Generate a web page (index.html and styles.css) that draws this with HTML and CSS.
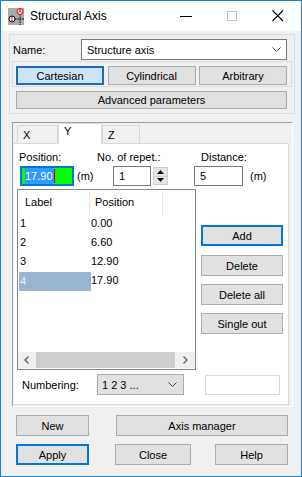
FILE: index.html
```html
<!DOCTYPE html>
<html lang="en">
<head>
    <meta charset="UTF-8">
    <title>Structural Axis</title>
    <link rel="stylesheet" href="styles.css">
</head>
<body>
<div class="window">
    <!-- Title bar -->
    <div class="titlebar">
        <svg class="app-icon" width="16" height="17" viewBox="0 0 16 17">
            <rect x="0" y="0" width="16" height="17" fill="#a9a9a9"/>
            <line x1="12" y1="6" x2="12" y2="17" stroke="#000" stroke-width="1" stroke-dasharray="1.5 1"/>
            <line x1="7" y1="11" x2="16" y2="11" stroke="#000" stroke-width="1" stroke-dasharray="1.5 1"/>
            <circle cx="12" cy="3.5" r="3" fill="#fff" stroke="#d00" stroke-width="1"/>
            <text x="12" y="5.3" font-size="5" text-anchor="middle" fill="#d00" font-family="Liberation Sans, sans-serif" font-weight="bold">A</text>
            <circle cx="4" cy="11" r="3" fill="#fff" stroke="#000" stroke-width="1"/>
            <text x="4" y="12.8" font-size="5" text-anchor="middle" fill="#d00" font-family="Liberation Sans, sans-serif" font-weight="bold">1</text>
        </svg>
        <span class="title">Structural Axis</span>
        <div class="win-controls">
            <div class="win-btn">
                <svg width="12" height="12" viewBox="0 0 12 12"><line x1="0" y1="6.5" x2="13" y2="6.5" stroke="#000"/></svg>
            </div>
            <div class="win-btn">
                <svg width="11" height="11" viewBox="0 0 11 11"><rect x="0.5" y="0.5" width="9" height="9" fill="none" stroke="#c4c4c4"/></svg>
            </div>
            <div class="win-btn">
                <svg width="12" height="12" viewBox="0 0 12 12"><path d="M0.5 0.5 L11 11 M11 0.5 L0.5 11" stroke="#000" stroke-width="1.1"/></svg>
            </div>
        </div>
    </div>

    <!-- Name / coordinate system -->
    <div class="group">
        <div class="name-row">
            <span class="name-label">Name:</span>
            <div class="combo">
                <span>Structure axis</span>
                <svg width="9" height="5" viewBox="0 0 9 5"><path d="M0.5 0.5 L4.5 4.5 L8.5 0.5" fill="none" stroke="#444"/></svg>
            </div>
        </div>
        <div class="mode-frame">
            <button class="btn mode selected">Cartesian</button>
            <button class="btn mode">Cylindrical</button>
            <button class="btn mode">Arbitrary</button>
        </div>
        <button class="btn adv">Advanced parameters</button>
    </div>

    <!-- Tabs -->
    <div class="tabbox">
        <div class="tabs">
            <div class="tab tab-x">X</div>
            <div class="tab tab-y active">Y</div>
            <div class="tab tab-z">Z</div>
        </div>
        <div class="panel">
            <div class="field-labels">
                <span class="lbl-pos">Position:</span>
                <span class="lbl-rep">No. of repet.:</span>
                <span>Distance:</span>
            </div>
            <div class="field-inputs">
                <div class="pos-input"><span class="sel-text">17.90</span><span class="caret"></span></div>
                <span class="unit unit-pos">(m)</span>
                <div class="edit rep-input">1</div>
                <div class="spin">
                    <div class="spin-half"><svg width="7" height="4" viewBox="0 0 7 4"><path d="M0 4 L3.5 0 L7 4 Z" fill="#000"/></svg></div>
                    <div class="spin-half"><svg width="7" height="4" viewBox="0 0 7 4"><path d="M0 0 L3.5 4 L7 0 Z" fill="#000"/></svg></div>
                </div>
                <div class="edit dist-input">5</div>
                <span class="unit unit-dist">(m)</span>
            </div>

            <div class="list-row">
                <div class="list">
                    <div class="list-head">
                        <div class="head-cell col-label">Label</div>
                        <div class="head-cell col-pos">Position</div>
                        <div class="head-cell col-rest"></div>
                    </div>
                    <div class="list-body">
                        <div class="list-item"><span class="cell-label">1</span><span>0.00</span></div>
                        <div class="list-item"><span class="cell-label">2</span><span>6.60</span></div>
                        <div class="list-item"><span class="cell-label">3</span><span>12.90</span></div>
                        <div class="list-item"><span class="cell-label selected">4</span><span>17.90</span></div>
                    </div>
                    <div class="hscroll">
                        <div class="scroll-arrow">
                            <svg width="5" height="8" viewBox="0 0 5 8"><path d="M4.5 0.5 L1 4 L4.5 7.5" fill="none" stroke="#606060" stroke-width="1.4"/></svg>
                        </div>
                        <div class="scroll-thumb"></div>
                        <div class="scroll-arrow right">
                            <svg width="5" height="8" viewBox="0 0 5 8"><path d="M0.5 0.5 L4 4 L0.5 7.5" fill="none" stroke="#606060" stroke-width="1.4"/></svg>
                        </div>
                    </div>
                </div>
                <div class="side-btns">
                    <button class="btn side default">Add</button>
                    <button class="btn side">Delete</button>
                    <button class="btn side">Delete all</button>
                    <button class="btn side">Single out</button>
                </div>
            </div>

            <div class="num-row">
                <span class="num-label">Numbering:</span>
                <div class="num-combo">
                    <span>1 2 3 ...</span>
                    <svg width="9" height="5" viewBox="0 0 9 5"><path d="M0.5 0.5 L4.5 4.5 L8.5 0.5" fill="none" stroke="#444"/></svg>
                </div>
                <div class="num-box"></div>
            </div>
        </div>
    </div>

    <!-- Dialog buttons -->
    <div class="foot-row">
        <button class="btn foot b-new">New</button>
        <button class="btn foot b-manager">Axis manager</button>
    </div>
    <div class="foot-row">
        <button class="btn foot b-apply default">Apply</button>
        <button class="btn foot b-close">Close</button>
        <button class="btn foot b-help">Help</button>
    </div>
</div>
</body>
</html>
```

FILE: styles.css
```css
* {
    box-sizing: border-box;
}

body {
    margin: 0;
    font-family: "Liberation Sans", Arial, sans-serif;
    font-size: 11px;
    color: #000;
}

.window {
    width: 302px;
    height: 477px;
    border: 1px solid #1883d7;
    background: #f0f0f0;
    overflow: hidden;
}

/* Title bar */
.titlebar {
    height: 30px;
    background: #fff;
    display: flex;
    align-items: center;
}

.app-icon {
    margin-left: 7px;
    margin-top: 1px;
}

.title {
    margin-left: 6px;
    font-size: 12px;
}

.win-controls {
    margin-left: auto;
    display: flex;
    height: 100%;
}

.win-btn {
    width: 46px;
    display: flex;
    align-items: center;
    justify-content: center;
}

/* Buttons */
.btn {
    font: inherit;
    color: #000;
    background: #e1e1e1;
    border: 1px solid #adadad;
    height: 21px;
    padding: 0;
    display: flex;
    align-items: center;
    justify-content: center;
}

.btn.default {
    border: 2px solid #0078d7;
}

/* Top group */
.group {
    margin: 3px 0 0 8px;
    width: 286px;
    height: 80px;
    border: 1px solid #dcdcdc;
}

.name-row {
    display: flex;
    align-items: center;
    margin-top: 4px;
    height: 21px;
}

.name-label {
    width: 71px;
    padding-left: 3px;
}

.combo {
    width: 206px;
    height: 21px;
    border: 1px solid #7a7a7a;
    background: #fff;
    display: flex;
    align-items: center;
    justify-content: space-between;
    padding: 0 5px 0 5px;
}

.mode-frame {
    margin: 1px 0 0 2px;
    width: 280px;
    height: 26px;
    border: 1px solid #dcdcdc;
    display: flex;
    justify-content: space-between;
    padding: 4px 4px 0 3px;
}

.mode {
    width: 88px;
    height: 19px;
}

.mode.selected {
    background: #cce4f7;
    border: 2px solid #1e6ab4;
}

.adv {
    margin: 4px 0 0 6px;
    width: 271px;
    height: 18px;
}

/* Tab box */
.tabbox {
    margin: 8px 0 0 11px;
    width: 281px;
    height: 285px;
    border-top: 1px solid #a0a0a0;
    border-left: 1px solid #a0a0a0;
    border-right: 1px solid #fff;
    border-bottom: 1px solid #fff;
    padding-left: 1px;
}

.tabs {
    display: flex;
    align-items: flex-end;
    height: 20px;
    padding-left: 3px;
}

.tab {
    height: 18px;
    border: 1px solid #d9d9d9;
    border-bottom: none;
    background: #f0f0f0;
    padding: 3px 0 0 5px;
}

.tab-x {
    width: 41px;
}

.tab-y {
    width: 44px;
}

.tab-z {
    width: 38px;
}

.tab.active {
    height: 21px;
    margin-bottom: -1px;
    background: #fff;
    padding-top: 1px;
    position: relative;
    z-index: 1;
}

.panel {
    width: 275px;
    height: 262px;
    background: #fff;
    border: 1px solid #d9d9d9;
    border-left: none;
}

.field-labels {
    display: flex;
    padding-top: 6px;
    height: 21px;
    line-height: 15px;
}

.lbl-pos {
    margin-left: 5px;
    width: 78px;
}

.lbl-rep {
    width: 104px;
}

.field-inputs {
    display: flex;
    align-items: center;
    height: 20px;
    margin-top: 1px;
}

.pos-input {
    margin-left: 6px;
    width: 54px;
    height: 20px;
    border: 2px solid #0078d7;
    background: #00ff00;
    padding: 0 0 0 3px;
    display: flex;
    align-items: center;
}

.sel-text {
    background: #3399ff;
    color: #fff;
    height: 16px;
    line-height: 16px;
    padding-right: 1px;
}

.caret {
    width: 1px;
    height: 14px;
    background: #d00000;
}

.unit-pos {
    margin-left: 3px;
    width: 36px;
}

.edit {
    height: 20px;
    border: 1px solid #7a7a7a;
    background: #fff;
    padding-left: 5px;
    line-height: 18px;
}

.rep-input {
    width: 38px;
}

.spin {
    margin-left: 2px;
    width: 15px;
    height: 18px;
    display: flex;
    flex-direction: column;
    border: 1px solid #cfcfcf;
    background: #e6e6e6;
}

.spin-half {
    flex: 1;
    display: flex;
    align-items: center;
    justify-content: center;
}

.spin-half + .spin-half {
    border-top: 1px solid #cfcfcf;
}

.dist-input {
    margin-left: 26px;
    width: 49px;
}

.unit-dist {
    margin-left: 7px;
}

/* List */
.list-row {
    display: flex;
    margin: 3px 0 0 3px;
}

.list {
    width: 179px;
    height: 181px;
    border: 1px solid #828790;
    display: flex;
    flex-direction: column;
}

.list-head {
    display: flex;
    height: 25px;
    padding-top: 2px;
}

.head-cell {
    line-height: 21px;
}

.col-label {
    width: 72px;
    padding-left: 7px;
    border-right: 1px solid #e5e5e5;
}

.col-pos {
    width: 73px;
    padding-left: 5px;
    border-right: 1px solid #e5e5e5;
}

.list-body {
    flex: 1;
}

.list-item {
    display: flex;
    height: 19px;
    line-height: 17px;
}

.cell-label {
    margin-left: 1px;
    width: 72px;
    padding-left: 1px;
}

.cell-label.selected {
    background: #99b4d1;
    color: #eef3f8;
    line-height: 19px;
    padding-top: 0;
}

.hscroll {
    display: flex;
    height: 16px;
    margin-bottom: 1px;
    background: #f0f0f0;
}

.scroll-arrow {
    width: 17px;
    display: flex;
    align-items: center;
    justify-content: center;
}

.scroll-thumb {
    width: 140px;
    margin-left: 1px;
    background: #cdcdcd;
}

.scroll-arrow.right {
    margin-left: auto;
    width: 20px;
}

.side-btns {
    margin: 36px 0 0 5px;
    display: flex;
    flex-direction: column;
    gap: 8px;
}

.side {
    width: 82px;
}

.side.default {
    margin-bottom: 1px;
}

/* Numbering */
.num-row {
    display: flex;
    align-items: center;
    margin-top: 4px;
    height: 21px;
}

.num-label {
    margin-left: 8px;
    width: 75px;
}

.num-combo {
    width: 87px;
    height: 21px;
    background: #e1e1e1;
    border: 1px solid #adadad;
    display: flex;
    align-items: center;
    justify-content: space-between;
    padding: 0 6px 0 4px;
}

.num-box {
    margin-left: 21px;
    width: 75px;
    height: 20px;
    border: 1px solid #d9d9d9;
    background: #fff;
}

/* Dialog buttons */
.foot-row {
    display: flex;
    margin: 8px 0 0 15px;
}

.b-new,
.b-apply,
.b-help {
    width: 73px;
}

.b-manager {
    margin-left: 27px;
    width: 172px;
}

.b-close {
    margin-left: 26px;
    width: 76px;
}

.b-help {
    margin-left: 24px;
}
```
